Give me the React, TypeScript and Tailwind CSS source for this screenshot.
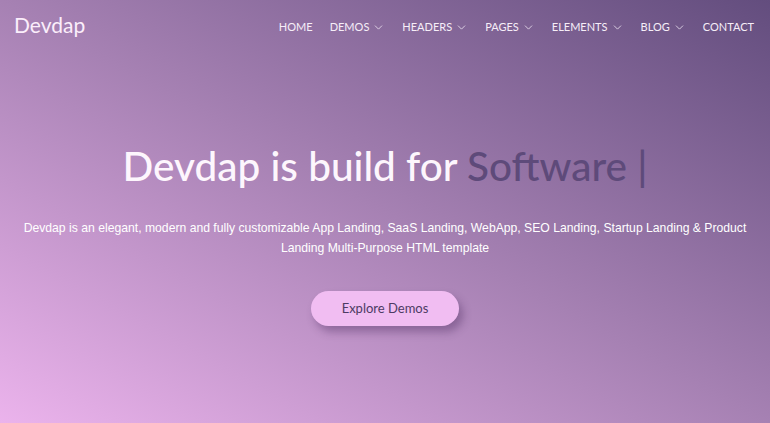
import { ChevronDown } from "lucide-react"

const NAV = [
  { label: "HOME", menu: false },
  { label: "DEMOS", menu: true },
  { label: "HEADERS", menu: true },
  { label: "PAGES", menu: true },
  { label: "ELEMENTS", menu: true },
  { label: "BLOG", menu: true },
  { label: "CONTACT", menu: false },
]

export default function App() {
  return (
    <main
      className="h-[423px] w-full overflow-hidden bg-[linear-gradient(to_top_right,#ebb3ec_0%,#a681b3_50%,#634d7e_100%)] text-white flex flex-col"
      style={{ fontFamily: "Lato, 'Open Sans', sans-serif" }}
    >
      <header className="flex items-center justify-between pl-[14px] pr-[16px] h-[54px]">
        <a className="text-[21px] leading-none pb-[5px] text-[#fbeefb]">Devdap</a>
        <nav className="flex items-center gap-[17px] text-[11px] text-[#f6eef8]">
          {NAV.map(n => (
            <a key={n.label} className="flex items-center gap-[3px]">
              {n.label}
              {n.menu && <ChevronDown size={13} strokeWidth={1.4} />}
            </a>
          ))}
        </nav>
      </header>

      <section className="flex flex-col items-center text-center pt-[89px]">
        <h1 className="text-[40.5px] leading-[46px] font-medium text-[#fdf6fd]">
          Devdap is build for <span className="text-[#5e4a7a]">Software |</span>
        </h1>
        <p
          className="mt-[29px] text-[12.2px] leading-[20px] w-[740px] text-white"
          style={{ fontFamily: "'Liberation Sans', Arial, sans-serif" }}
        >
          Devdap is an elegant, modern and fully customizable App Landing, SaaS Landing, WebApp, SEO Landing, Startup Landing &amp; Product Landing Multi-Purpose HTML template
        </p>
        <button className="mt-[33px] h-[35px] w-[148px] rounded-full bg-[#f1bdf2] text-[13px] text-[#4d3b63] shadow-[4px_6px_8px_rgba(60,30,80,0.35)]">
          Explore Demos
        </button>
      </section>
    </main>
  )
}
